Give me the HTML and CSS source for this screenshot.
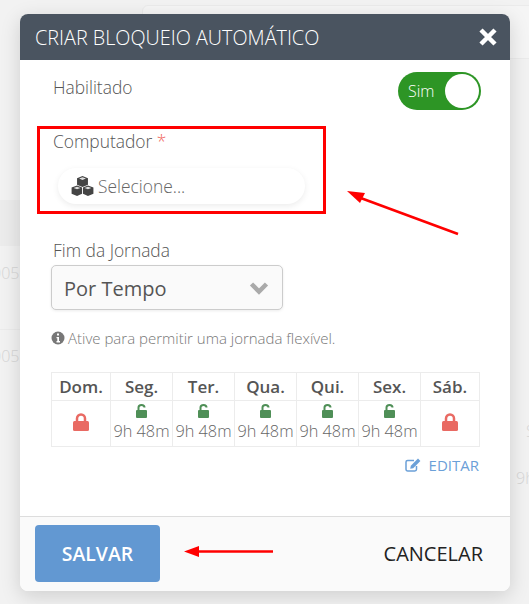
FILE: index.html
```html
<!DOCTYPE html>
<html lang="pt-BR">
<head>
    <meta charset="UTF-8">
    <meta name="viewport" content="width=device-width, initial-scale=1.0">
    <title>Criar bloqueio automático</title>
    <link rel="stylesheet" href="styles.css">
</head>

<body>
    <div class="backdrop">
        <div class="bg-panel"></div>
        <div class="bg-band"></div>
        <div class="bg-line"></div>
        <span class="bg-text bg-left-1">005</span>
        <span class="bg-text bg-left-2">005</span>
        <span class="bg-text bg-right-1">S</span>
        <span class="bg-text bg-right-2">9h</span>
    </div>

    <div class="modal">
        <header class="modal-header">
            <h1>CRIAR BLOQUEIO AUTOMÁTICO</h1>
            <svg class="close-icon" viewBox="0 0 20 20" aria-hidden="true">
                <path d="M3 3 17 17M17 3 3 17"/>
            </svg>
        </header>

        <main class="modal-body">
            <div class="enabled-row">
                <span class="label">Habilitado</span>
                <div class="toggle">
                    <span>Sim</span>
                    <div class="knob"></div>
                </div>
            </div>

            <div class="computer-field">
                <div class="label">Computador <span class="required">*</span></div>
                <div class="picker">
                    <svg class="cubes-icon" viewBox="0 0 24 22" aria-hidden="true">
                        <path d="M12 0 18 2.400V9.600L12 12 6 9.600V2.400Z"/>
                        <path d="M6 10.400 11.500 12.600V19.600L6 22 0 19.600V12.600Z"/>
                        <path d="M18 10.400 24 12.600V19.600L18 22 12.500 19.600V12.600Z"/>
                        <path class="cube-top" d="M12 1.300 15.800 2.800 12 4.300 8.200 2.800ZM6 11.800 9.800 13.200 6 14.700 2.200 13.200ZM18 11.800 21.800 13.200 18 14.700 14.200 13.200Z"/>
                    </svg>
                    <span>Selecione...</span>
                </div>
            </div>

            <div class="label end-label">Fim da Jornada</div>
            <div class="select-box">
                <span>Por Tempo</span>
                <svg class="chevron" viewBox="0 0 20 14" aria-hidden="true">
                    <path d="M2.500 3 10 10.500 17.500 3"/>
                </svg>
            </div>

            <p class="hint">
                <svg class="info-icon" viewBox="0 0 14 14" aria-hidden="true">
                    <circle cx="7" cy="7" r="6.500"/>
                    <path class="info-mark" d="M6 2.500H8V4.500H6ZM5.500 6H8V10H9V11.500H5.500V10H6.300V7.300H5.500Z"/>
                </svg>
                Ative para permitir uma jornada flexível.
            </p>

            <table class="week">
                <thead>
                    <tr>
                        <th class="day-end">Dom.</th>
                        <th>Seg.</th>
                        <th>Ter.</th>
                        <th>Qua.</th>
                        <th>Qui.</th>
                        <th>Sex.</th>
                        <th class="day-end">Sáb.</th>
                    </tr>
                </thead>
                <tbody>
                    <tr>
                        <td>
                            <svg class="lock lock-closed" viewBox="0 0 16 18" aria-hidden="true">
                                <path class="shackle" d="M4 9V5.500C4 3.200 5.700 1.500 8 1.500S12 3.200 12 5.500V9"/>
                                <rect y="8" width="16" height="10" rx="1.500"/>
                            </svg>
                        </td>
                        <td>
                            <svg class="lock lock-open" viewBox="0 0 11 14" aria-hidden="true">
                                <path class="shackle" d="M2.500 7V3.500C2.500 1.900 3.800 1 5.500 1S8.500 1.900 8.500 3.500"/>
                                <rect y="6" width="11" height="8" rx="1"/>
                            </svg>
                            <div class="hours">9h 48m</div>
                        </td>
                        <td>
                            <svg class="lock lock-open" viewBox="0 0 11 14" aria-hidden="true">
                                <path class="shackle" d="M2.500 7V3.500C2.500 1.900 3.800 1 5.500 1S8.500 1.900 8.500 3.500"/>
                                <rect y="6" width="11" height="8" rx="1"/>
                            </svg>
                            <div class="hours">9h 48m</div>
                        </td>
                        <td>
                            <svg class="lock lock-open" viewBox="0 0 11 14" aria-hidden="true">
                                <path class="shackle" d="M2.500 7V3.500C2.500 1.900 3.800 1 5.500 1S8.500 1.900 8.500 3.500"/>
                                <rect y="6" width="11" height="8" rx="1"/>
                            </svg>
                            <div class="hours">9h 48m</div>
                        </td>
                        <td>
                            <svg class="lock lock-open" viewBox="0 0 11 14" aria-hidden="true">
                                <path class="shackle" d="M2.500 7V3.500C2.500 1.900 3.800 1 5.500 1S8.500 1.900 8.500 3.500"/>
                                <rect y="6" width="11" height="8" rx="1"/>
                            </svg>
                            <div class="hours">9h 48m</div>
                        </td>
                        <td>
                            <svg class="lock lock-open" viewBox="0 0 11 14" aria-hidden="true">
                                <path class="shackle" d="M2.500 7V3.500C2.500 1.900 3.800 1 5.500 1S8.500 1.900 8.500 3.500"/>
                                <rect y="6" width="11" height="8" rx="1"/>
                            </svg>
                            <div class="hours">9h 48m</div>
                        </td>
                        <td>
                            <svg class="lock lock-closed" viewBox="0 0 16 18" aria-hidden="true">
                                <path class="shackle" d="M4 9V5.500C4 3.200 5.700 1.500 8 1.500S12 3.200 12 5.500V9"/>
                                <rect y="8" width="16" height="10" rx="1.500"/>
                            </svg>
                        </td>
                    </tr>
                </tbody>
            </table>

            <div class="edit-row">
                <a class="edit-link" href="#">
                    <svg class="edit-icon" viewBox="0 0 16 14" aria-hidden="true">
                        <path class="edit-box" d="M11.500 8V11.200C11.500 12.200 10.800 12.900 9.800 12.900H2.700C1.700 12.900 1 12.200 1 11.200V4.100C1 3.100 1.700 2.400 2.700 2.400H9"/>
                        <path class="edit-pen" d="M13 .6 15.400 3 8.200 10.200 5.200 10.800 5.800 7.800Z"/>
                    </svg>
                    EDITAR
                </a>
            </div>
        </main>

        <footer class="modal-footer">
            <button class="btn-save">SALVAR</button>
            <button class="btn-cancel">CANCELAR</button>
        </footer>
    </div>

    <!-- marcacoes vermelhas do print -->
    <div class="mark-box"></div>
    <svg class="mark-arrows" viewBox="0 0 529 604" aria-hidden="true">
        <path class="mark-line" d="M458 234 358 197"/>
        <path class="mark-head" d="M347 191 365 193 360 203Z"/>
        <path class="mark-line" d="M273 551.500H195"/>
        <path class="mark-head" d="M184 551.500 199 546V557Z"/>
    </svg>
</body>
</html>
```

FILE: styles.css
```css
* {
    box-sizing: border-box;
}

body {
    margin: 0;
    width: 529px;
    height: 604px;
    padding: 14px 19px 13px 20px;
    overflow: hidden;
    position: relative;
    background: #f2f2f2;
    color: #666;
    font-family: 'Open Sans', sans-serif;
}

.backdrop {
    position: absolute;
    inset: 0;
    overflow: hidden;
}

.bg-panel {
    position: absolute;
    top: 5px;
    left: 142px;
    right: -10px;
    height: 54px;
    border: 1px solid #ebebeb;
    border-radius: 6px;
    background: #f5f5f5;
}

.bg-band {
    position: absolute;
    top: 200px;
    left: 0;
    width: 20px;
    height: 46px;
    background: #ececec;
}

.bg-line {
    position: absolute;
    top: 329px;
    left: 0;
    width: 20px;
    height: 1px;
    background: #ebebeb;
}

.bg-text {
    position: absolute;
    color: #d6d6d6;
    font-size: 16px;
    font-weight: 300;
}

.bg-left-1 {
    top: 262px;
    left: -8px;
}

.bg-left-2 {
    top: 345px;
    left: -8px;
}

.bg-right-1 {
    top: 420px;
    left: 526px;
}

.bg-right-2 {
    top: 467px;
    left: 516px;
}

.modal {
    position: relative;
    height: 577px;
    display: flex;
    flex-direction: column;
    border-radius: 8px;
    overflow: hidden;
    background: #fff;
    box-shadow: 0 5px 20px rgba(0, 0, 0, 0.15);
}

.modal-header {
    height: 46px;
    flex: none;
    display: flex;
    align-items: center;
    justify-content: space-between;
    padding: 0 12px 0 15px;
    background: #4a5460;
    color: #fff;
}

.modal-header h1 {
    margin: 0;
    font-size: 19.800px;
    font-weight: 300;
}

.close-icon {
    width: 20px;
    height: 20px;
    fill: none;
    stroke: #fff;
    stroke-width: 4.500;
}

.modal-body {
    flex: 1;
    padding: 12px 29px 0 31px;
}

.label {
    font-size: 17.400px;
    font-weight: 300;
    line-height: 24px;
    color: #555;
}

.enabled-row {
    display: flex;
    align-items: flex-start;
    justify-content: space-between;
    padding: 0 0 0 2px;
    height: 57px;
}

.enabled-row .label {
    margin-top: 3px;
}

.toggle {
    width: 83px;
    height: 38px;
    display: flex;
    align-items: center;
    justify-content: space-between;
    padding: 0 2px 0 10px;
    border-radius: 19px;
    background: #2d9525;
    color: #fff;
    font-size: 16px;
    font-weight: 300;
}

.knob {
    width: 34px;
    height: 34px;
    border-radius: 50%;
    background: #fff;
}

.computer-field {
    height: 86px;
    padding-left: 2px;
}

.required {
    color: #f0645a;
}

.picker {
    width: 247px;
    height: 36px;
    margin: 15px 0 0 5px;
    display: flex;
    align-items: center;
    gap: 4px;
    padding-left: 13px;
    border-radius: 18px;
    background: #fff;
    box-shadow: 0 2px 6px rgba(0, 0, 0, 0.08);
    font-size: 17.400px;
    font-weight: 300;
}

.cubes-icon {
    width: 23px;
    height: 20px;
    fill: #444;
}

.cube-top {
    fill: #ddd;
}

.end-label {
    margin-top: 23px;
    padding-left: 2px;
}

.select-box {
    width: 232px;
    height: 45px;
    margin-top: 3px;
    display: flex;
    align-items: center;
    justify-content: space-between;
    padding: 1px 13px 0 12px;
    border: 1px solid #ccc;
    border-radius: 5px;
    background: #fafafa;
    box-shadow: 0 1px 3px rgba(0, 0, 0, 0.08);
    color: #555;
    font-size: 20px;
}

.chevron {
    width: 20px;
    height: 14px;
    fill: none;
    stroke: #aaa;
    stroke-width: 4.500;
}

.hint {
    margin: 18px 0 0;
    display: flex;
    align-items: center;
    gap: 3px;
    font-size: 15px;
    font-weight: 300;
    line-height: 20px;
    color: #777;
    white-space: nowrap;
}

.info-icon {
    width: 14px;
    height: 14px;
    fill: #777;
}

.info-mark {
    fill: #fff;
}

.week {
    width: 429px;
    margin-top: 24px;
    border-collapse: collapse;
    table-layout: fixed;
}

.week th,
.week td {
    border: 1px solid #ececec;
    padding: 0;
    text-align: center;
    vertical-align: middle;
}

.week th {
    width: 62px;
    height: 28px;
    color: #555;
    font-size: 17px;
    font-weight: 600;
}

.week th.day-end {
    width: 59px;
}

.week td {
    height: 46px;
}

.hours {
    margin-top: 2px;
    font-size: 16.300px;
    font-weight: 300;
    line-height: 23px;
    white-space: nowrap;
}

.lock {
    display: block;
    margin: 0 auto;
}

.lock-closed {
    width: 16px;
    height: 18px;
    margin-top: -3px;
    fill: #e96a63;
    stroke: none;
}

.lock-closed .shackle {
    fill: none;
    stroke: #e96a63;
    stroke-width: 2.500;
}

.lock-open {
    width: 11px;
    height: 14px;
    fill: #4f8f57;
}

.lock-open .shackle {
    fill: none;
    stroke: #4f8f57;
    stroke-width: 2;
}

.edit-row {
    display: flex;
    justify-content: flex-end;
    width: 428px;
    margin-top: 8px;
}

.edit-link {
    display: flex;
    align-items: center;
    gap: 8px;
    text-decoration: none;
    color: #6ba0d8;
    font-size: 15px;
}

.edit-icon {
    width: 16px;
    height: 14px;
}

.edit-box {
    fill: none;
    stroke: #6ba0d8;
    stroke-width: 1.500;
}

.edit-pen {
    fill: #6ba0d8;
}

.modal-footer {
    height: 75px;
    flex: none;
    display: flex;
    align-items: flex-start;
    justify-content: space-between;
    padding: 8px 27px 0 15px;
    border-top: 1px solid #ddd;
    background: #fafafa;
}

.modal-footer button {
    border: none;
    font-family: inherit;
    cursor: pointer;
}

.btn-save {
    width: 125px;
    height: 57px;
    border-radius: 4px;
    background: #6298d2;
    color: #fff;
    font-size: 19.400px;
    font-weight: 600;
}

.btn-cancel {
    height: 57px;
    padding: 0;
    background: none;
    color: #222;
    font-size: 20px;
}

.mark-box {
    position: absolute;
    top: 126px;
    left: 37px;
    width: 289px;
    height: 88px;
    border: 3px solid #f00;
}

.mark-arrows {
    position: absolute;
    inset: 0;
    width: 529px;
    height: 604px;
}

.mark-line {
    fill: none;
    stroke: #f00;
    stroke-width: 2.500;
}

.mark-head {
    fill: #f00;
}
```
